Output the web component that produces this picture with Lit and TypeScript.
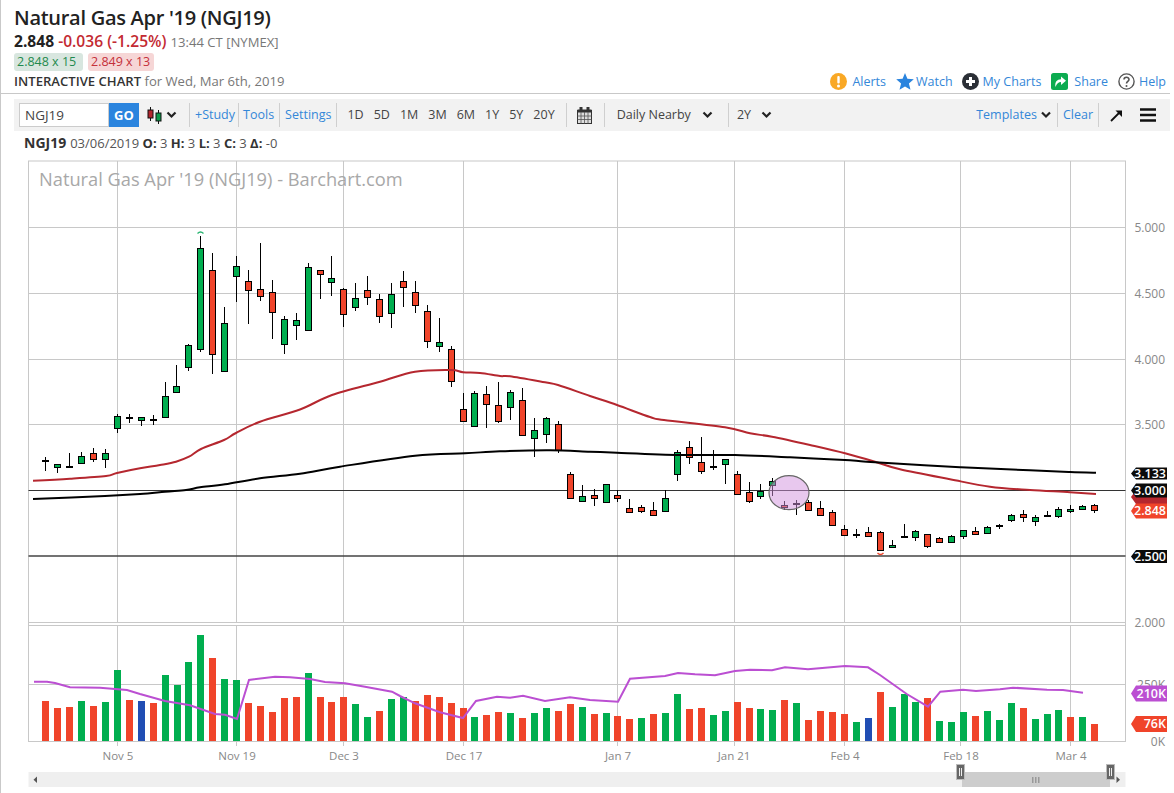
import { LitElement, html, css, svg } from "lit";
import { customElement } from "lit/decorators.js";

const xs = [45.3,57.3,69.3,81.3,93.3,105.3,117.3,129.3,141.3,153.3,165.3,176.7,188.3,200.3,212.3,224.3,236.3,248.3,260.3,272.3,284.3,296.3,308.3,320.3,331.3,343.3,355.3,367.3,379.3,391.3,403.3,415.3,427.3,439.3,451.3,463.3,474.3,486.3,498.3,510.3,522.3,534.3,546.3,558.3,570.3,582.3,594.3,606.3,617.3,629.3,641.3,653.3,665.3,677.3,689.3,701.3,713.3,725.3,737.3,749.3,760.3,772.3,784.3,796.3,808.3,820.3,832.3,844.3,856.3,868.3,880.3,892.3,904.3,915.3,927.3,939.3,951.3,963.3,975.3,987.3,999.3,1011.3,1023.3,1035.3,1047.3,1058.3,1070.3,1082.3,1094.3];

type C = [number, number, number, number, string];
const candles: C[] = [
[457,461,461,471,"d"],[464,464,467,473,"g"],[453,467,467,467,"d"],[452,456,463,463,"g"],[448,453,459,462,"r"],[449,453,459,468,"g"],
[414,416,428,433,"g"],[414,418,418,423,"d"],[417,417,420,426,"g"],[415,420,420,425,"d"],[382,396,417,417,"g"],[365,386,392,392,"g"],
[344,345,367,371,"g"],[236,248,349,352,"g"],[253,270,354,374,"r"],[307,323,371,371,"g"],[256,266,276,302,"g"],[270,281,290,324,"r"],
[243,289,296,301,"r"],[280,292,312,339,"r"],[316,319,344,354,"g"],[313,320,325,340,"g"],[263,267,330,330,"g"],[270,270,274,299,"r"],
[256,278,282,296,"g"],[288,289,314,327,"r"],[283,298,307,311,"g"],[276,290,297,305,"r"],[294,299,316,323,"r"],[283,294,313,328,"g"],
[271,281,287,307,"r"],[281,292,305,313,"r"],[305,311,341,348,"r"],[318,342,346,352,"g"],[346,349,381,387,"r"],[393,409,421,421,"r"],
[391,393,426,426,"g"],[386,394,404,428,"r"],[382,405,421,423,"r"],[390,392,407,420,"g"],[388,400,435,435,"r"],[418,430,438,457,"g"],
[417,418,434,443,"g"],[421,424,450,453,"r"],[472,474,498,499,"r"],[485,496,501,502,"g"],[489,495,498,506,"r"],[484,484,502,503,"g"],
[490,495,498,502,"r"],[499,508,512,512,"r"],[505,507,511,513,"r"],[502,510,515,516,"r"],[490,498,511,511,"g"],[450,452,474,481,"g"],
[441,447,457,464,"r"],[437,462,471,474,"r"],[450,467,467,470,"d"],[459,459,464,484,"g"],[471,474,494,494,"r"],[482,492,501,503,"r"],
[484,491,496,499,"g"],[478,481,485,496,"g"],[501,505,507,510,"r"],[500,504,504,515,"d"],[500,502,510,510,"r"],[501,508,515,515,"r"],
[510,512,525,525,"r"],[525,529,535,535,"r"],[529,535,535,538,"d"],[527,532,536,536,"r"],[531,532,550,550,"r"],[540,545,547,548,"g"],
[524,537,537,538,"d"],[530,531,537,541,"g"],[534,534,546,548,"r"],[537,538,542,542,"r"],[535,536,542,543,"g"],[530,530,536,539,"g"],
[527,531,534,534,"r"],[526,527,533,533,"g"],[524,526,526,529,"d"],[514,515,520,522,"g"],[510,514,517,522,"r"],[515,517,521,526,"g"],
[511,516,516,517,"d"],[507,509,516,518,"g"],[505,509,511,513,"g"],[505,506,509,510,"g"],[504,505,510,513,"r"],
];

const vols: [number, string][] = [
[40,"r"],[33,"r"],[34,"r"],[40,"g"],[35,"r"],[39,"g"],[71,"g"],[41,"r"],[40,"b"],[38,"r"],[66,"g"],[56,"g"],[79,"g"],[106,"g"],[83,"r"],[62,"g"],[61,"g"],[38,"r"],[35,"r"],[29,"r"],[43,"r"],[44,"r"],[68,"g"],[44,"r"],[39,"r"],[44,"r"],[37,"g"],[24,"g"],[30,"r"],[42,"g"],
[44,"g"],[40,"r"],[46,"r"],[44,"r"],[38,"r"],[33,"r"],[24,"g"],[26,"r"],[29,"r"],[28,"g"],[23,"r"],[28,"g"],[33,"g"],[30,"r"],[37,"r"],[34,"g"],[27,"r"],[28,"g"],[25,"r"],[22,"r"],[23,"g"],[27,"r"],[28,"g"],[47,"g"],[32,"r"],[33,"r"],[26,"g"],[30,"g"],[39,"r"],[33,"r"],[32,"g"],[31,"g"],[41,"r"],[38,"g"],
[21,"r"],[30,"r"],[29,"r"],[27,"r"],[19,"g"],[23,"b"],[49,"r"],[34,"g"],[47,"g"],[39,"g"],[43,"r"],[20,"g"],[19,"g"],[29,"g"],[25,"r"],[30,"g"],[21,"g"],[38,"g"],[33,"r"],[22,"g"],[27,"g"],[31,"g"],[24,"r"],[24,"g"],[17,"r"],
];

const redLine = "33,480.7 70,478.7 106,476 117,473 140,468.3 160,465 176,461.7 189,456.7 201,449 224,440 236,433 260,421.7 300,409.5 332,395 380,381.7 415,371.7 451,370 463,372.3 480,373 500,376 510,376.3 545,382.3 558,385 590,396 617,405 650,417 664,420 725,427.3 750,433.3 772,436.7 810,445 845,453.3 875,461.7 900,469.3 950,479.3 990,486.7 1030,490 1070,492.3 1096,494";
const blackLine = "33,499 105,496 140,494 165,491.7 186,490 200,487.3 225,484.3 260,478.3 300,473.7 340,466.7 415,455.7 465,453.3 500,451.3 550,450.3 590,451.7 617,452.7 680,455 735,455 790,457.3 850,460.3 875,462.3 960,467.3 1030,470.3 1070,472 1096,472.7";
const purpleLine = "34,681.7 47,681.7 55,683 70,687.3 100,687.7 127,690 140,694 165,701 190,705.3 215,714 225,714.7 237,719 249,680 275,676.7 290,677.3 310,679 325,682 345,683.3 365,686.7 392,691.7 400,696 415,703.3 440,712.3 463,718 476,701 497,696.7 510,697.7 523,695.7 545,701 570,697.3 590,700 618,701.7 630,678.7 665,676 678,673 695,674.3 715,675.3 735,671 750,669.7 772,670.3 785,667.3 808,669.3 845,666 868,667.3 880,675 906.7,694 928,706.7 940.3,691.7 963,689.7 976,691 1000,689.3 1013,687.7 1047,689.7 1063,690 1083,692.7";

/* Catmull-Rom through the moving-average samples, as the source curves are smooth. */
function smooth(points: string) {
  const p = points.split(" ").map((s) => s.split(",").map(Number));
  let d = `M${p[0][0]} ${p[0][1]}`;
  for (let i = 0; i < p.length - 1; i++) {
    const a = p[Math.max(i - 1, 0)], b = p[i], c = p[i + 1], e = p[Math.min(i + 2, p.length - 1)];
    const c1x = b[0] + (c[0] - a[0]) / 6, c1y = b[1] + (c[1] - a[1]) / 6;
    const c2x = c[0] - (e[0] - b[0]) / 6, c2y = c[1] - (e[1] - b[1]) / 6;
    d += ` C${c1x.toFixed(1)} ${c1y.toFixed(1)} ${c2x.toFixed(1)} ${c2y.toFixed(1)} ${c[0]} ${c[1]}`;
  }
  return d;
}

const vgrid = [117, 236, 343, 463, 617, 734, 844, 960, 1070];
const dates: [number, string][] = [[118,"Nov 5"],[237,"Nov 19"],[344,"Dec 3"],[464,"Dec 17"],[618,"Jan 7"],[734,"Jan 21"],[845,"Feb 4"],[961,"Feb 18"],[1071,"Mar 4"]];
const hgrid = [227, 293, 359, 424, 622, 625, 684];
const yAxis: [number, string][] = [[227,"5.000"],[293,"4.500"],[359,"4.000"],[424,"3.500"],[622,"2.000"],[684,"250K"],[741,"0K"]];

const fill: Record<string, string> = { g: "#00ae4f", r: "#f0442a", b: "#214eb4" };

function tag(y: number, label: string, bg: string, h = 14) {
  const t = y - h / 2, b = y + h / 2;
  return svg`<path d="M1131 ${y} L1136 ${t} H1167 V${b} H1136 Z" fill=${bg}></path>
    <text class="tagt" x="1166" y=${y + 4.4} text-anchor="end">${label}</text>`;
}

@customElement("app-root")
export class AppRoot extends LitElement {
  static styles = css`
    :host { display: block; width: 1173px; height: 793px; border-left: 1px solid #c9c9c9; background: #fff; overflow: hidden; font-family: "Open Sans", "Noto Sans", sans-serif; color: #333; }
    .head { height: 94px; box-sizing: border-box; margin-right: 4px; padding-left: 13px; border-bottom: 1px solid #c8c8c8; }
    .title { font-size: 20px; font-weight: 600; color: #222; line-height: 26px; padding-top: 5px; letter-spacing: -0.28px; }
    .price { display: flex; align-items: baseline; line-height: 20px; font-size: 15.6px; font-weight: 700; color: #222; }
    .chg { color: #c32a32; margin-left: 4px; font-weight: 600; }
    .time { color: #777; font-size: 13.1px; font-weight: 400; margin-left: 4px; }
    .quotes { display: flex; gap: 5px; margin-top: 1px; }
    .quote { height: 18px; line-height: 18px; border-radius: 3px; font-size: 12.5px; padding: 0 3px; box-sizing: border-box; }
    .bid { width: 69px; background: #d8e6df; color: #1f8a4e; }
    .ask { width: 66px; background: #f6d6d6; color: #c5303a; }
    .sub { display: flex; justify-content: space-between; align-items: center; height: 18px; margin-top: 1px; font-size: 13.1px; color: #777; }
    .sub b { color: #333; font-weight: 600; }
    .links { display: flex; align-items: center; font-size: 12.5px; color: #3487d8; margin-right: 4px; }
    .links svg { display: block; }
    .l1 { margin-left: 5px; margin-right: 10px; }
    .l2 { margin-left: 2px; margin-right: 9px; }
    .l3 { margin-left: 4px; margin-right: 10px; }
    .l4 { margin-left: 6px; margin-right: 10px; }
    .l5 { margin-left: 4px; }
    .toolbar { display: flex; align-items: center; height: 32px; margin: 5px 4px 0 13px; background: #f2f2f2; padding-left: 5px; font-size: 12.5px; color: #444; box-sizing: border-box; }
    .sym { width: 90px; height: 24px; box-sizing: border-box; background: #fff; border: 1px solid #ccc; font-size: 13.5px; line-height: 22px; padding-left: 5px; color: #444; }
    .go { width: 30px; height: 24px; line-height: 24px; background: #2a84de; color: #fff; font-weight: 700; font-size: 13px; text-align: center; }
    .div { width: 1px; height: 24px; background: #cfcfcf; flex: none; }
    .blue { color: #3487d8; font-size: 12.5px; padding-bottom: 2px; }
    .ctype { display: flex; align-items: center; gap: 4px; margin: 0 12px 0 8px; }
    .s1 { margin: 0 3px 0 5px; }
    .s2 { margin: 0 5px 0 4px; }
    .s3 { margin: 0 5px; }
    .ranges { display: flex; gap: 10px; margin: 0 11px 0 10px; padding-bottom: 2px; }
    .cal { margin: 0 12px 0 10px; display: block; }
    .dd { display: flex; align-items: center; gap: 11px; }
    .dd span { padding-bottom: 2px; }
    .d1 { margin: 0 15px 0 12px; }
    .d2 { margin: 0 0 0 8px; gap: 10px; }
    .spacer { flex: 1; }
    .tpl { display: flex; align-items: center; gap: 3px; margin-right: 5px; padding-bottom: 0; }
    .tpl span { padding-bottom: 2px; }
    .clr { margin: 0 5px; }
    .tools { display: flex; align-items: center; gap: 17px; margin: 0 14px 0 11px; }
    .legend { height: 21px; box-sizing: border-box; padding: 2px 0 0 23px; display: flex; align-items: center; gap: 4px; font-size: 13px; color: #555; white-space: pre; }
    .legend .sym2 { font-size: 14px; font-weight: 700; color: #333; }
    .legend b { color: #333; font-weight: 700; }
    .chart { display: block; }
    .axis { font-size: 12px; fill: #888; }
    .date { font-size: 11.5px; fill: #888; }
    .wm { font-size: 18.25px; fill: #a8a8a8; }
    .tagt { font-size: 12.5px; font-weight: 600; fill: #fff; }
  `;

  private chevron(w = 11) {
    return html`<svg width=${w} height="8" viewBox="0 0 11 8"><path d="M1.5 1.5 L5.5 5.5 L9.5 1.5" fill="none" stroke="#222" stroke-width="2.2"></path></svg>`;
  }

  private chart() {
    const fy = 161, right = 1125.5, left = 28.5, bottom = 741.5;
    return html`<svg class="chart" width="1173" height="641" viewBox="1 152 1173 641">
      <rect x=${left} y=${fy} width=${right - left} height=${bottom - fy} fill="#fff" stroke="#c8c8c8"></rect>
      ${hgrid.map((y) => svg`<line x1=${left} x2=${right} y1=${y + 0.5} y2=${y + 0.5} stroke="#c8c8c8"></line>`)}
      ${vgrid.map((x) => svg`<line x1=${x + 0.5} x2=${x + 0.5} y1=${fy} y2="622" stroke="#c8c8c8"></line><line x1=${x + 0.5} x2=${x + 0.5} y1="625" y2="746" stroke="#c8c8c8"></line>`)}
      <text class="wm" x="39" y="186">Natural Gas Apr '19 (NGJ19) - Barchart.com</text>
      ${yAxis.map(([y, t]) => svg`<text class="axis" x="1165" y=${y + 4.5} text-anchor="end">${t}</text>`)}
      ${dates.map(([x, t]) => svg`<text class="date" x=${x} y="760" text-anchor="middle">${t}</text>`)}
      <line x1=${left} x2=${right} y1="490.5" y2="490.5" stroke="#333" stroke-width="1.2"></line>
      <line x1=${left} x2=${right} y1="556" y2="556" stroke="#444" stroke-width="1.4"></line>
      ${vols.map(([h, c], i) => svg`<rect x=${Math.round(xs[i]) - 3} y=${741 - h} width="7" height=${h} fill=${fill[c]}></rect>`)}
      <polyline points=${purpleLine} fill="none" stroke="#bb4fd2" stroke-width="2"></polyline>
      ${candles.map(([h, t, b, l, c], i) => {
        const x = Math.floor(xs[i]) + 0.5;
        if (c === "d") {
          return svg`<line x1=${x} x2=${x} y1=${h} y2=${l} stroke="#000"></line><rect x=${x - 3.5} y=${t - 1} width="7" height="2" fill="#000"></rect>`;
        }
        return svg`<line x1=${x} x2=${x} y1=${h} y2=${l} stroke="#000"></line><rect x=${x - 3} y=${t + 0.5} width="6" height=${b - t} fill=${fill[c]} stroke="#000"></rect>`;
      })}
      <path d=${smooth(redLine)} fill="none" stroke="#b5272f" stroke-width="2"></path>
      <path d=${smooth(blackLine)} fill="none" stroke="#000" stroke-width="2"></path>
      <ellipse cx="789" cy="492.7" rx="20" ry="17" fill="rgba(210,145,222,.5)" stroke="#666" stroke-width="1.2"></ellipse>
      <path d="M197.5 233.5 Q200.5 230.5 203.5 233.5" fill="none" stroke="#2bb673" stroke-width="1.4"></path>
      <path d="M877.5 553 Q880.5 556 883.5 553" fill="none" stroke="#f0442a" stroke-width="1.4"></path>
      ${tag(497, "", "#b5272f")}
      ${tag(473.5, "3.133", "#0b0b0b", 12)}
      ${tag(490.5, "3.000", "#0b0b0b")}
      ${tag(511, "2.848", "#f0442a", 15)}
      ${tag(556.5, "2.500", "#0b0b0b", 13)}
      ${tag(693.5, "210K", "#bb4fd2", 16)}
      ${tag(724, "76K", "#f0442a", 16)}
      <rect x=${left} y="772" width="1097" height="15" fill="#efefef"></rect>
      <path d="M37 776.5 V783 L33.5 779.7 Z" fill="#555"></path>
      <rect x="962" y="772" width="148" height="15" fill="#cdcdcd"></rect>
      <path d="M1116.5 776.5 V783 L1120 779.7 Z" fill="#555"></path>
      <g fill="#999"><rect x="1032" y="777" width="1.5" height="6"></rect><rect x="1035" y="777" width="1.5" height="6"></rect><rect x="1038" y="777" width="1.5" height="6"></rect></g>
      ${[956.5, 1106.5].map((x) => svg`<rect x=${x} y="764.5" width="8" height="15" fill="#666" stroke="#bbb"></rect><rect x=${x + 2.5} y="768" width="1" height="8" fill="#eee"></rect><rect x=${x + 4.5} y="768" width="1" height="8" fill="#eee"></rect>`)}
    </svg>`;
  }

  render() {
    return html`
      <div class="head">
        <div class="title">Natural Gas Apr '19 (NGJ19)</div>
        <div class="price">2.848<span class="chg">-0.036 (-1.25%)</span><span class="time">13:44 CT [NYMEX]</span></div>
        <div class="quotes"><div class="quote bid">2.848 x 15</div><div class="quote ask">2.849 x 13</div></div>
        <div class="sub">
          <div><b>INTERACTIVE CHART</b> for Wed, Mar 6th, 2019</div>
          <div class="links">
            <svg width="17" height="17" viewBox="0 0 17 17"><circle cx="8.5" cy="8.5" r="8.5" fill="#f9a825"></circle><rect x="7.3" y="3" width="2.4" height="7.5" rx="1" fill="#fff"></rect><circle cx="8.5" cy="13" r="1.5" fill="#fff"></circle></svg>
            <span class="l1">Alerts</span>
            <svg width="18" height="17" viewBox="0 0 18 17"><path d="M9 0 L11.4 5.8 L17.8 6.3 L12.9 10.4 L14.5 16.8 L9 13.4 L3.5 16.8 L5.1 10.4 L.2 6.3 L6.6 5.8 Z" fill="#2a84de"></path></svg>
            <span class="l2">Watch</span>
            <svg width="17" height="17" viewBox="0 0 17 17"><circle cx="8.5" cy="8.5" r="8.5" fill="#2b2f36"></circle><path d="M8.5 4 V13 M4 8.5 H13" stroke="#fff" stroke-width="3"></path></svg>
            <span class="l3">My Charts</span>
            <svg width="17" height="17" viewBox="0 0 17 17"><rect width="17" height="17" rx="2.5" fill="#0cab50"></rect><path d="M4.5 14 C3.5 9 6 6.3 10 6.2 V3.5 L15 7.8 L10 12 V9 C7.5 9 5.8 10.5 4.5 14 Z" fill="#fff"></path></svg>
            <span class="l4">Share</span>
            <svg width="17" height="17" viewBox="0 0 17 17"><circle cx="8.5" cy="8.5" r="7.6" fill="none" stroke="#555" stroke-width="1.4"></circle><path d="M6 6.6 C6 3.5 11 3.5 11 6.5 C11 8.4 8.5 8.4 8.5 10.6" fill="none" stroke="#555" stroke-width="1.6"></path><circle cx="8.5" cy="13" r="1" fill="#555"></circle></svg>
            <span class="l5">Help</span>
          </div>
        </div>
      </div>
      <div class="toolbar">
        <div class="sym">NGJ19</div><div class="go">GO</div>
        <div class="ctype">
          <svg width="15" height="17" viewBox="0 0 15 17"><path d="M3.5 0 V14 M11.5 3 V17" stroke="#111"></path><rect x="1" y="3" width="5" height="8" fill="#b3262e" stroke="#111"></rect><rect x="9" y="6" width="5" height="8" fill="#0a9a4a" stroke="#111"></rect></svg>
          ${this.chevron()}
        </div>
        <div class="div"></div><span class="blue s1">+Study</span>
        <div class="div"></div><span class="blue s2">Tools</span>
        <div class="div"></div><span class="blue s3">Settings</span>
        <div class="div"></div>
        <div class="ranges"><span>1D</span><span>5D</span><span>1M</span><span>3M</span><span>6M</span><span>1Y</span><span>5Y</span><span>20Y</span></div>
        <div class="div"></div>
        <svg class="cal" width="15" height="17" viewBox="0 0 15 17"><rect x=".5" y="3.5" width="14" height="13" fill="#ddd" stroke="#333"></rect><rect x=".5" y="2.5" width="14" height="3" fill="#333"></rect><rect x="2.5" y="0" width="3" height="4" fill="#333"></rect><rect x="9.5" y="0" width="3" height="4" fill="#333"></rect><path d="M.5 9 H14.5 M.5 12.5 H14.5 M4 5 V16.5 M7.5 5 V16.5 M11 5 V16.5" stroke="#555" stroke-width=".8"></path></svg>
        <div class="div"></div>
        <div class="dd d1"><span>Daily Nearby</span>${this.chevron()}</div>
        <div class="div"></div>
        <div class="dd d2"><span>2Y</span>${this.chevron()}</div>
        <div class="spacer"></div>
        <div class="tpl blue"><span>Templates</span>${this.chevron(12)}</div>
        <div class="div"></div><span class="blue clr">Clear</span>
        <div class="div"></div>
        <div class="tools">
          <svg width="13" height="13" viewBox="0 0 13 13"><path d="M1 12 L10 3" stroke="#111" stroke-width="1.8"></path><path d="M5.5 1.5 H12 V8 Z" fill="#111"></path></svg>
          <svg width="16" height="14" viewBox="0 0 16 14"><path d="M0 1.5 H16 M0 7 H16 M0 12.5 H16" stroke="#111" stroke-width="2.6"></path></svg>
        </div>
      </div>
      <div class="legend"><span class="sym2">NGJ19</span><span>03/06/2019 <b>O:</b> 3 <b>H:</b> 3 <b>L:</b> 3 <b>C:</b> 3 <b>Δ:</b> -0</span></div>
      ${this.chart()}
    `;
  }
}
